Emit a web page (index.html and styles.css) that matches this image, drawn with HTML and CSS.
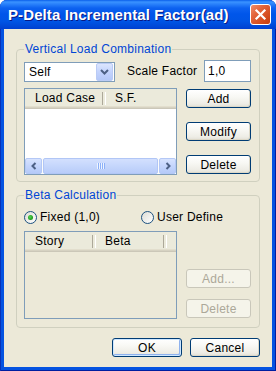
FILE: index.html
```html
<!DOCTYPE html>
<html>
<head>
<meta charset="utf-8">
<title>P-Delta Incremental Factor(ad)</title>
<link rel="stylesheet" href="styles.css">
</head>
<body>
<div class="window">
  <div class="titlebar">
    <span class="title">P-Delta Incremental Factor(ad)</span>
    <span class="close"><svg width="13" height="13" viewBox="0 0 13 13"><path d="M2.5 2.5 L10.5 10.5 M10.5 2.5 L2.5 10.5" stroke="#fff" stroke-width="2.2" stroke-linecap="square"/></svg></span>
  </div>
  <div class="client">
    <fieldset class="group g1">
      <legend>Vertical Load Combination</legend>
      <div class="row1">
        <div class="combo">
          <span class="combo-text">Self</span>
          <span class="combo-btn"><svg width="9" height="6" viewBox="0 0 9 6"><path d="M1 1 L4.5 4.5 L8 1" fill="none" stroke="#4D6185" stroke-width="2"/></svg></span>
        </div>
        <span class="label">Scale Factor</span>
        <div class="textbox">1,0</div>
      </div>
      <div class="row2">
        <div class="list l1">
          <div class="lhead">
            <span class="col c-load">Load Case</span>
            <span class="col c-sf">S.F.</span>
          </div>
          <div class="lbody"></div>
          <div class="hscroll">
            <span class="sbtn"><svg width="6" height="8" viewBox="0 0 6 8"><path d="M4.5 1 L1.5 4 L4.5 7" fill="none" stroke="#4D6185" stroke-width="2"/></svg></span>
            <span class="sthumb"><span class="grip"></span></span>
            <span class="sbtn"><svg width="6" height="8" viewBox="0 0 6 8"><path d="M1.5 1 L4.5 4 L1.5 7" fill="none" stroke="#4D6185" stroke-width="2"/></svg></span>
          </div>
        </div>
        <div class="btncol b1">
          <div class="btn">Add</div>
          <div class="btn">Modify</div>
          <div class="btn">Delete</div>
        </div>
      </div>
    </fieldset>
    <fieldset class="group g2">
      <legend>Beta Calculation</legend>
      <div class="radios">
        <div class="radio r1"><span class="rcircle checked"><span class="dot"></span></span><span>Fixed (1,0)</span></div>
        <div class="radio"><span class="rcircle"></span><span>User Define</span></div>
      </div>
      <div class="row3">
        <div class="list l2">
          <div class="lhead">
            <span class="col c-story">Story</span>
            <span class="col c-beta">Beta</span>
          </div>
          <div class="lbody"></div>
        </div>
        <div class="btncol b2">
          <div class="btn disabled">Add...</div>
          <div class="btn disabled">Delete</div>
        </div>
      </div>
    </fieldset>
    <div class="footer">
      <div class="btn default">OK</div>
      <div class="btn">Cancel</div>
    </div>
  </div>
</div>
</body>
</html>
```

FILE: styles.css
```css
* { box-sizing: border-box; }
html, body { margin: 0; padding: 0; }
body {
  font-family: "Liberation Sans", Arial, sans-serif;
  font-size: 12px;
  letter-spacing: 0.25px;
  color: #000;
  background: #fff;
}
.window {
  width: 276px;
  height: 371px;
  display: flex;
  flex-direction: column;
  background: #0453E1;
  border-radius: 7px 7px 0 0;
  overflow: hidden;
  box-shadow: inset 1px 0 #0831B8, inset -1px 0 #001EA0, inset 0 -1px #001EA0;
}
.titlebar {
  height: 29px;
  flex: none;
  display: flex;
  align-items: center;
  padding: 0 5px 0 8px;
  background: linear-gradient(to bottom, #0A5FEA 0, #3A93FF 2px, #2A82FB 4px, #0D62F0 8px, #0056EA 14px, #0055E5 21px, #0049D8 26px, #003FD0 29px);
}
.title {
  flex: 1;
  color: #fff;
  font-weight: bold;
  font-size: 15px;
  letter-spacing: 0.1px;
  text-shadow: 1px 1px 0 #0A1883;
  white-space: nowrap;
  line-height: 18px;
}
.close {
  width: 21px;
  height: 21px;
  border: 1px solid #fff;
  border-radius: 3px;
  display: flex;
  align-items: center;
  justify-content: center;
  background: linear-gradient(135deg, #F08D6A 0%, #E3643A 35%, #D24A1C 75%, #C23C10 100%);
}
.close svg { display: block; }
.client {
  flex: 1;
  margin: 0 4px 4px 4px;
  background: #ECE9D8;
  padding: 13px 12px 0 12px;
  display: flex;
  flex-direction: column;
}
.group {
  margin: 0;
  min-width: 0;
  width: 244px;
  border: 1px solid #D0D0BF;
  border-radius: 4px;
  padding: 4px 7px 6px 7px;
}
.group legend {
  padding: 0 1px;
  margin: 0;
  line-height: 14px;
  color: #0046D5;
}
.g2 {
  margin-top: 6px;
  padding: 7px 7px 8px 7px;
}
.row1 {
  display: flex;
  align-items: center;
  height: 22px;
}
.combo {
  width: 91px;
  height: 20px;
  margin-top: 1px;
  border: 1px solid #7F9DB9;
  background: #fff;
  display: flex;
  align-items: center;
  padding: 1px;
}
.combo-text {
  flex: 1;
  padding-left: 3px;
}
.combo-btn {
  width: 17px;
  height: 18px;
  border-radius: 2px;
  border: 1px solid #BACBF5;
  background: linear-gradient(to bottom, #DCE6FE, #C3D3FD 50%, #B4C8F8);
  display: flex;
  align-items: center;
  justify-content: center;
}
.combo-btn svg, .sbtn svg { display: block; }
.label {
  margin-left: 12px;
}
.textbox {
  margin-left: auto;
  margin-right: 1px;
  width: 47px;
  height: 22px;
  border: 1px solid #7F9DB9;
  background: #fff;
  padding: 2px 0 0 3px;
  line-height: 16px;
}
.row2 {
  display: flex;
  margin-top: 6px;
}
.list {
  width: 153px;
  border: 1px solid #7F9DB9;
  display: flex;
  flex-direction: column;
  overflow: hidden;
}
.l1 { height: 87px; background: #fff; }
.l2 { height: 88px; background: #ECE9D8; }
.lhead {
  height: 20px;
  flex: none;
  display: flex;
  background: #EBEADB;
  box-shadow: inset 0 -1px #CBC7B8, inset 0 -2px #D6D2C2, inset 0 -3px #E2DECD;
}
.col {
  flex: none;
  height: 20px;
  line-height: 18px;
  position: relative;
}
.col::after {
  content: "";
  position: absolute;
  right: 0;
  top: 3px;
  bottom: 4px;
  width: 2px;
  border-left: 1px solid #ACA899;
  border-right: 1px solid #fff;
}
.c-load { width: 81px; padding-left: 10px; }
.c-sf { width: 80px; padding-left: 9px; }
.c-story { width: 71px; padding-left: 10px; }
.c-beta { width: 71px; padding-left: 9px; }
.lbody { flex: 1; }
.hscroll {
  height: 16px;
  flex: none;
  display: flex;
  background: #FCFCFA;
}
.sbtn {
  width: 17px;
  height: 16px;
  flex: none;
  border: 1px solid #B4C8F6;
  border-radius: 2px;
  background: linear-gradient(to bottom, #D7E3FE, #C4D5FC 50%, #B5CAF8);
  display: flex;
  align-items: center;
  justify-content: center;
}
.sthumb {
  flex: 1;
  margin: 0 1px;
  border: 1px solid #B1C6F6;
  border-radius: 2px;
  background: linear-gradient(to bottom, #D3E0FE, #C5D6FC 50%, #B8CCF9);
  display: flex;
  align-items: center;
  justify-content: center;
}
.grip {
  width: 8px;
  height: 6px;
  background: repeating-linear-gradient(to right, #EEF4FE 0, #EEF4FE 1px, #8CB0F8 1px, #8CB0F8 2px);
}
.btncol {
  margin-left: auto;
  margin-right: 1px;
  width: 65px;
  display: flex;
  flex-direction: column;
}
.b1 { margin-top: 1px; gap: 14px; }
.b2 { align-self: flex-end; gap: 11px; margin-bottom: 1px; }
.btn {
  height: 19px;
  border: 1px solid #003C74;
  border-radius: 3px;
  background: linear-gradient(to bottom, #FFFFFF 0%, #F8F8F4 40%, #EEEDE6 80%, #E2E0D6 100%);
  box-shadow: inset -1px -1px 0 #DCD8C8;
  display: flex;
  align-items: center;
  justify-content: center;
  line-height: 14px;
}
.btn.disabled {
  border-color: #C9C7BA;
  background: #F5F4EA;
  box-shadow: none;
  color: #ACA899;
}
.btn.default {
  box-shadow: inset 0 0 0 1px #CEE7FF, inset -1px -1px 0 1px #8FB2EE;
}
.radios {
  display: flex;
  align-items: center;
  height: 16px;
}
.radio {
  display: flex;
  align-items: center;
  gap: 3px;
}
.r1 { width: 117px; }
.rcircle {
  width: 13px;
  height: 13px;
  border: 1px solid #1C5180;
  border-radius: 50%;
  background: linear-gradient(135deg, #DCDCD5, #FFFFFF);
  display: flex;
  align-items: center;
  justify-content: center;
}
.dot {
  width: 5px;
  height: 5px;
  border-radius: 50%;
  background: radial-gradient(circle at 40% 40%, #55D455, #21A121 60%, #1A8A1A);
}
.row3 {
  display: flex;
  margin-top: 6px;
}
.footer {
  display: flex;
  justify-content: flex-end;
  gap: 8px;
  margin-top: 10px;
}
.footer .btn {
  width: 70px;
}
```
